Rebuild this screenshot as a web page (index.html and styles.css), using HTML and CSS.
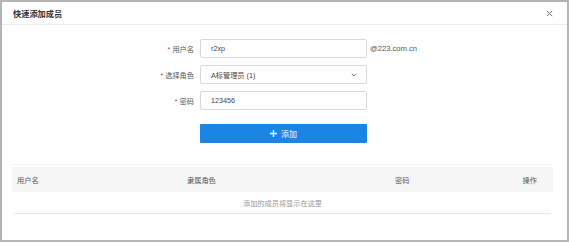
FILE: index.html
```html
<!DOCTYPE html>
<html lang="zh-CN">
<head>
  <meta charset="UTF-8">
  <meta name="viewport" content="width=device-width, initial-scale=1.0">
  <title>快速添加成员</title>
  <link rel="stylesheet" href="styles.css">
</head>
<body>
  <div class="dialog">
    <header class="dialog-head">
      <span class="title">快速添加成员</span>
      <span class="close">
        <svg width="7" height="7" viewBox="0 0 7 7"><path d="M0.8 0.8L6.2 6.2M6.2 0.8L0.8 6.2" stroke="#777" stroke-width="1"/></svg>
      </span>
    </header>
    <div class="form">
      <div class="row">
        <label class="label"><i>*</i>用户名</label>
        <div class="input">r2xp</div>
        <span class="suffix">@223.com.cn</span>
      </div>
      <div class="row">
        <label class="label"><i>*</i>选择角色</label>
        <div class="input select">
          <span>A标管理员 (1)</span>
          <svg width="6" height="4" viewBox="0 0 6 4"><path d="M0.7 0.7L3 3L5.3 0.7" fill="none" stroke="#888" stroke-width="1"/></svg>
        </div>
      </div>
      <div class="row">
        <label class="label"><i>*</i>密码</label>
        <div class="input">123456</div>
      </div>
      <div class="row">
        <span class="label"></span>
        <button class="btn-add">
          <svg width="7" height="7" viewBox="0 0 7 7"><path d="M3.5 0V7M0 3.5H7" stroke="#fff" stroke-width="1.4"/></svg>
          添加
        </button>
      </div>
    </div>
    <div class="table">
      <div class="thead">
        <div class="cell">用户名</div>
        <div class="cell">隶属角色</div>
        <div class="cell">密码</div>
        <div class="cell op">操作</div>
      </div>
      <div class="empty">添加的成员将显示在这里</div>
    </div>
  </div>
</body>
</html>
```

FILE: styles.css
```css
* {
  box-sizing: border-box;
}
html, body {
  margin: 0;
  padding: 0;
}
body {
  font-family: "Liberation Sans", "Noto Sans CJK SC", sans-serif;
  font-size: 7.2px;
  color: #444;
  background: #fff;
}
.dialog {
  width: 569px;
  height: 242px;
  border: 2px solid #b4b4b4;
  background: #fff;
}
.dialog-head {
  height: 23px;
  display: flex;
  align-items: center;
  justify-content: space-between;
  padding: 0 14px 0 11px;
  border-bottom: 1px solid #ececec;
}
.title {
  font-size: 8.2px;
  font-weight: bold;
  color: #333;
}
.close {
  display: flex;
}
.form {
  padding-top: 14px;
  display: flex;
  flex-direction: column;
  gap: 7px;
}
.row {
  display: flex;
  align-items: center;
}
.label {
  width: 192px;
  margin-right: 6px;
  text-align: right;
  color: #555;
}
.label i {
  font-style: normal;
  color: #f04134;
  margin-right: 2px;
}
.input {
  width: 167px;
  height: 19px;
  border: 1px solid #d9d9d9;
  border-radius: 2px;
  padding: 0 9px 0 10px;
  display: flex;
  align-items: center;
  color: #444;
}
.select {
  justify-content: space-between;
}
.suffix {
  margin-left: 3px;
  font-size: 7.6px;
  color: #555;
}
.row:last-child {
  margin-top: 7px;
}
.btn-add {
  width: 167px;
  height: 19px;
  border: none;
  border-radius: 1px;
  background: #1c84e4;
  color: #fff;
  font-family: inherit;
  font-size: 8px;
  display: flex;
  align-items: center;
  justify-content: center;
  gap: 4px;
  padding: 0;
}
.table {
  margin: 21px 0 0 10px;
  width: 541px;
  border-top: 1px solid #f5f5f5;
  padding-top: 2px;
}
.thead {
  height: 25px;
  background: #f6f6f6;
  display: grid;
  grid-template-columns: 170px 208px 1fr 60px;
  align-items: center;
  color: #555;
}
.thead .cell {
  padding-left: 5px;
}
.thead .op {
  text-align: right;
  padding-right: 16px;
}
.empty {
  height: 22px;
  margin: 0 2px;
  display: flex;
  align-items: center;
  justify-content: center;
  color: #999;
  border-bottom: 1px solid #e8e8e8;
}
```
